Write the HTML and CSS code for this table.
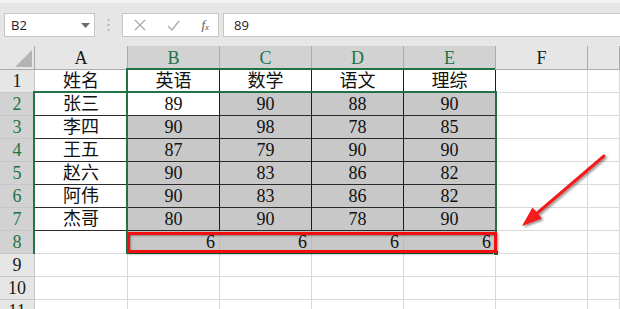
FILE: index.html
```html
<!DOCTYPE html>
<html lang="zh">
<head>
<meta charset="utf-8">
<title>成绩表</title>
<link rel="stylesheet" href="styles.css">
</head>
<body>
<div class="app">
  <div class="toolbar">
    <div class="namebox">
      <span class="ref">B2</span>
      <svg class="caret" width="9" height="5" viewBox="0 0 9 5"><path d="M0 0h9L4.5 5z" fill="#6b6b6b"/></svg>
    </div>
    <div class="grip">
      <svg width="3" height="13" viewBox="0 0 3 13"><rect x="0.5" y="0" width="2" height="2" fill="#b8b8b8"/><rect x="0.5" y="5" width="2" height="2" fill="#b8b8b8"/><rect x="0.5" y="10" width="2" height="2" fill="#b8b8b8"/></svg>
    </div>
    <div class="fbtns">
      <svg class="ico" width="12" height="12" viewBox="0 0 12 12"><path d="M1 1l10 10M11 1L1 11" stroke="#a9a9a9" stroke-width="1.2" fill="none"/></svg>
      <svg class="ico" width="13" height="11" viewBox="0 0 13 11"><path d="M1 6l4 4L12 1" stroke="#a9a9a9" stroke-width="1.3" fill="none"/></svg>
      <span class="fx">f<sub>x</sub></span>
    </div>
    <div class="finput">89</div>
  </div>

  <div class="sheet">
    <div class="grid">
      <div class="ch corner"><span class="tri"></span></div>
      <div class="ch">A</div>
      <div class="ch on">B</div>
      <div class="ch on">C</div>
      <div class="ch on">D</div>
      <div class="ch on">E</div>
      <div class="ch">F</div>
      <div class="ch"></div>

      <div class="rh">1</div>
      <div class="c t">姓名</div>
      <div class="c t">英语</div>
      <div class="c t">数学</div>
      <div class="c t">语文</div>
      <div class="c t">理综</div>
      <div class="c"></div>
      <div class="c"></div>

      <div class="rh on">2</div>
      <div class="c t">张三</div>
      <div class="c t">89</div>
      <div class="c t g">90</div>
      <div class="c t g">88</div>
      <div class="c t g">90</div>
      <div class="c"></div>
      <div class="c"></div>

      <div class="rh on">3</div>
      <div class="c t">李四</div>
      <div class="c t g">90</div>
      <div class="c t g">98</div>
      <div class="c t g">78</div>
      <div class="c t g">85</div>
      <div class="c"></div>
      <div class="c"></div>

      <div class="rh on">4</div>
      <div class="c t">王五</div>
      <div class="c t g">87</div>
      <div class="c t g">79</div>
      <div class="c t g">90</div>
      <div class="c t g">90</div>
      <div class="c"></div>
      <div class="c"></div>

      <div class="rh on">5</div>
      <div class="c t">赵六</div>
      <div class="c t g">90</div>
      <div class="c t g">83</div>
      <div class="c t g">86</div>
      <div class="c t g">82</div>
      <div class="c"></div>
      <div class="c"></div>

      <div class="rh on">6</div>
      <div class="c t">阿伟</div>
      <div class="c t g">90</div>
      <div class="c t g">83</div>
      <div class="c t g">86</div>
      <div class="c t g">82</div>
      <div class="c"></div>
      <div class="c"></div>

      <div class="rh on">7</div>
      <div class="c t">杰哥</div>
      <div class="c t g">80</div>
      <div class="c t g">90</div>
      <div class="c t g">78</div>
      <div class="c t g">90</div>
      <div class="c"></div>
      <div class="c"></div>

      <div class="rh on">8</div>
      <div class="c"></div>
      <div class="c g num">6</div>
      <div class="c g num">6</div>
      <div class="c g num">6</div>
      <div class="c g num">6</div>
      <div class="c"></div>
      <div class="c"></div>

      <div class="rh">9</div>
      <div class="c"></div><div class="c"></div><div class="c"></div><div class="c"></div><div class="c"></div><div class="c"></div><div class="c"></div>

      <div class="rh">10</div>
      <div class="c"></div><div class="c"></div><div class="c"></div><div class="c"></div><div class="c"></div><div class="c"></div><div class="c"></div>

      <div class="rh">11</div>
      <div class="c"></div><div class="c"></div><div class="c"></div><div class="c"></div><div class="c"></div><div class="c"></div><div class="c"></div>
    </div>

    <!-- selection outlines drawn over the grid -->
    <div class="sel sel-main"></div>
    <div class="sel sel-names"></div>
    <div class="sel sel-b1"></div>
    <div class="sel sel-head"></div>
    <div class="handle"></div>
    <div class="mark"></div>
  </div>

  <svg class="arrow" width="620" height="309" viewBox="0 0 620 309">
    <defs>
      <filter id="sh" x="-20%" y="-20%" width="140%" height="140%">
        <feDropShadow dx="1.5" dy="1.5" stdDeviation="1.2" flood-color="#000" flood-opacity="0.45"/>
      </filter>
    </defs>
    <g filter="url(#sh)">
      <line x1="604" y1="156" x2="535" y2="215" stroke="#f21b1b" stroke-width="3" stroke-linecap="round"/>
      <polygon points="522,226 532.5,207.5 542,218.5" fill="#f21b1b"/>
    </g>
  </svg>
</div>
</body>
</html>
```

FILE: styles.css
```css
* {
  box-sizing: border-box;
}

html,
body {
  margin: 0;
  padding: 0;
  background: #ffffff;
}

.app {
  position: relative;
  width: 620px;
  height: 309px;
  overflow: hidden;
  font-family: "Liberation Serif", "Noto Sans CJK SC", serif;
}

/* formula bar */
.toolbar {
  height: 46px;
  background: #e6e6e6;
  border-top: 3px solid #f3f3f3;
  display: flex;
  align-items: flex-start;
  padding-top: 10px;
  font-family: "Open Sans", "Noto Sans", sans-serif;
  font-size: 13px;
  color: #222;
}

.namebox {
  margin-left: 4px;
  width: 91px;
  height: 24px;
  background: #fff;
  border: 1px solid #c6c6c6;
  display: flex;
  align-items: center;
  justify-content: space-between;
  padding: 0 4px 0 6px;
}

.ref {
  line-height: 22px;
}

.caret {
  display: block;
}

.grip {
  width: 27px;
  height: 24px;
  display: flex;
  align-items: center;
  justify-content: center;
}

.grip svg {
  display: block;
}

.fbtns {
  width: 97px;
  height: 24px;
  background: #fff;
  border: 1px solid #c6c6c6;
  display: flex;
  align-items: center;
  justify-content: space-between;
  padding: 0 9px 0 11px;
}

.ico {
  display: block;
}

.fx {
  font-family: "Liberation Serif", serif;
  font-style: italic;
  font-size: 13px;
  color: #555;
  line-height: 1;
}

.fx sub {
  font-size: 9px;
  vertical-align: -1px;
}

.finput {
  flex: 1;
  margin-left: 4px;
  height: 24px;
  background: #fff;
  border: 1px solid #c6c6c6;
  border-right: none;
  padding-left: 10px;
  line-height: 22px;
}

/* sheet grid */
.sheet {
  position: relative;
}

.grid {
  display: grid;
  grid-template-columns: 35px 93px 92px 92px 92px 92px 92px 1fr;
  grid-template-rows: 24px repeat(11, 23px);
  font-size: 18px;
  color: #111;
}

.ch,
.rh {
  background: #e6e6e6;
  color: #1a1a1a;
  border-right: 1px solid #c6c6c6;
  border-bottom: 1px solid #c6c6c6;
  display: flex;
  align-items: center;
  justify-content: center;
  font-size: 18px;
  line-height: 22px;
}

.ch {
  border-right-color: #ababab;
  border-bottom-color: #ababab;
  padding-top: 1px;
}

.ch.on,
.rh.on {
  background: #d2d2d2;
  color: #217346;
}

.corner {
  position: relative;
}

.tri {
  position: absolute;
  right: 2px;
  bottom: 2px;
  width: 0;
  height: 0;
  border-left: 17px solid transparent;
  border-bottom: 17px solid #b4b4b4;
}

.c {
  border-right: 1px solid #d9d9d9;
  border-bottom: 1px solid #d9d9d9;
  text-align: center;
  line-height: 22px;
  white-space: nowrap;
  overflow: hidden;
}

.c.t {
  border-right-color: #1e1e1e;
  border-bottom-color: #2a2a2a;
}

.c.g {
  background: #c8c8c8;
}

.c.num {
  text-align: right;
  padding-right: 4px;
  border-right-color: #bdbdbd;
  border-bottom-color: #bdbdbd;
}

/* selection outlines */
.sel {
  position: absolute;
  border: 0 solid #217346;
}

.sel-main {
  left: 126px;
  top: 45px;
  width: 371px;
  height: 163px;
  border-width: 2px;
}

.sel-names {
  left: 33px;
  top: 45px;
  width: 94px;
  height: 163px;
  border-left-width: 2px;
  border-top-width: 2px;
}

.sel-b1 {
  left: 126px;
  top: 22px;
  width: 2px;
  height: 24px;
  background: #217346;
}

.sel-head {
  left: 127px;
  top: 22px;
  width: 368px;
  height: 2px;
  background: #217346;
}

.handle {
  position: absolute;
  left: 493px;
  top: 204px;
  width: 6px;
  height: 6px;
  background: #217346;
  border: 1px solid #fff;
}

.mark {
  position: absolute;
  left: 127px;
  top: 186px;
  width: 370px;
  height: 21px;
  border: 3px solid #f40f0f;
  box-shadow: 1px 1px 2px rgba(0, 0, 0, 0.45), inset 1px 1px 2px rgba(0, 0, 0, 0.35);
}

.arrow {
  position: absolute;
  left: 0;
  top: 0;
  pointer-events: none;
}
```
